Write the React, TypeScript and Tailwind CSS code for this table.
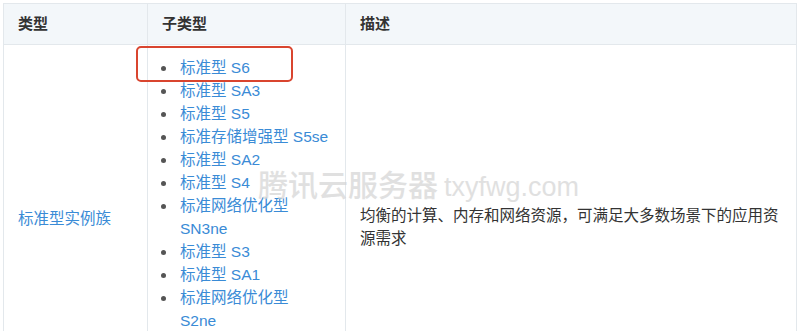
import React from "react";

const items: string[][] = [
  ["标准型 S6"],
  ["标准型 SA3"],
  ["标准型 S5"],
  ["标准存储增强型 S5se"],
  ["标准型 SA2"],
  ["标准型 S4"],
  ["标准网络优化型", "SN3ne"],
  ["标准型 S3"],
  ["标准型 SA1"],
  ["标准网络优化型", "S2ne"],
  ["标准型 S2"],
  ["标准型 S1"],
];

export default function App() {
  return (
    <div
      className="w-[800px] h-[331px] overflow-hidden bg-white relative"
      style={{ fontFamily: '"Liberation Sans", "Noto Sans CJK SC", sans-serif' }}
    >
      <div className="pt-[3px] pl-[3px] pr-[3px]">
        <table className="w-[794px] border-collapse table-fixed text-[15.5px] text-[#333]">
          <colgroup>
            <col className="w-[144px]" />
            <col className="w-[198px]" />
            <col />
          </colgroup>
          <thead>
            <tr className="bg-[#f3f7fa] h-[41px]">
              <th className="border border-[#e3e8ec] text-left font-semibold pl-[14px] align-middle text-[15px]">类型</th>
              <th className="border border-[#e3e8ec] text-left font-semibold pl-[14px] align-middle text-[15px]">子类型</th>
              <th className="border border-[#e3e8ec] text-left font-semibold pl-[14px] align-middle text-[15px]">描述</th>
            </tr>
          </thead>
          <tbody>
            <tr>
              <td className="border border-[#e3e8ec] align-top pl-[14px] pt-[162px] text-[#3a8bd6] leading-[23px]">
                标准型实例族
              </td>
              <td className="border border-[#e3e8ec] align-top pl-[12px] pt-[11px] pb-[12px]">
                <ul className="relative">
                  {items.map((lines, i) => (
                    <li key={i} className="flex leading-[23px]">
                      <span className="w-[20px] shrink-0 flex justify-start pl-[1px] pt-[10px]">
                        <span className="block w-[5px] h-[5px] rounded-full bg-[#555]" />
                      </span>
                      <span className="text-[#3a8bd6]">
                        {lines.map((l, j) => (
                          <span key={j} className="block">{l}</span>
                        ))}
                      </span>
                    </li>
                  ))}
                  <div className="absolute left-[-24px] top-[-10px] w-[157px] h-[36px] border-2 border-[#d9452f] rounded-[5px]" />
                </ul>
              </td>
              <td className="border border-[#e3e8ec] align-top pl-[14px] pr-[14px] pt-[159px] leading-[23px]">
                均衡的计算、内存和网络资源，可满足大多数场景下的应用资源需求
              </td>
            </tr>
          </tbody>
        </table>
      </div>
      <div className="absolute left-[258px] top-[168px] flex items-baseline gap-[6px] text-[#d4d4d4] opacity-70 pointer-events-none select-none">
        <span className="text-[30px] font-medium leading-none" style={{ fontFamily: '"Noto Sans CJK SC", sans-serif' }}>腾讯云服务器</span>
        <span className="text-[27px] leading-none" style={{ fontFamily: '"Liberation Sans", sans-serif' }}>txyfwg.com</span>
      </div>
    </div>
  );
}
